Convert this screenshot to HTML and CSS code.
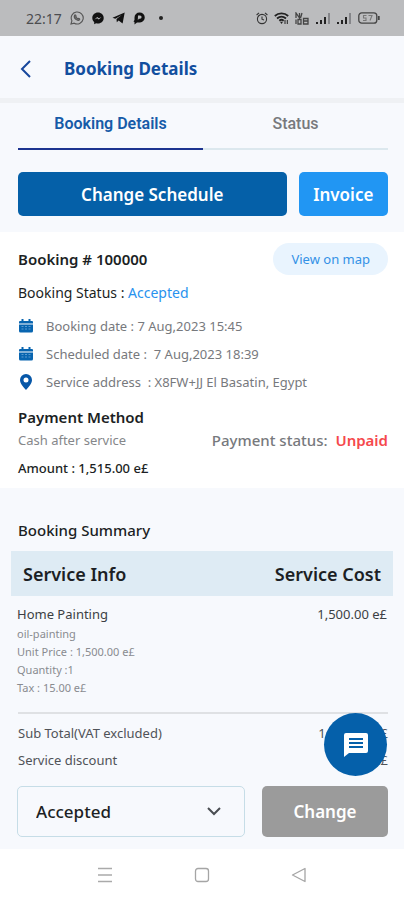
FILE: index.html
```html
<!DOCTYPE html>
<html lang="en">
<head>
<meta charset="utf-8">
<meta name="viewport" content="width=device-width, initial-scale=1">
<title>Booking Details</title>
<link rel="stylesheet" href="styles.css">
</head>
<body>
<div class="screen">
  <div class="statusbar">
    <div class="status-group">
      <span class="clock">22:17</span>
      <svg width="14" height="14" viewBox="0 0 14 14" fill="none" stroke="#555" stroke-width="1.1"><path d="M1 13l.9-3.2A6 6 0 1 1 4.200 12.200z"/><path d="M4.600 4.200c.8-.8 1.300.2 1.500 1.100-.6.900-.2 1.200 1.700 2.500.8-.8 1.600-.3 2 .4-.5 1.700-2.200 1.500-3.900.2C4.400 7.200 3.900 5.600 4.600 4.200z" fill="#777"/></svg>
      <svg width="12" height="13" viewBox="0 0 12 13"><path d="M6 .5C2.700.5.300 2.900.300 6c0 1.700.700 3.100 1.900 4.100v2.100l1.900-1c.6.200 1.200.3 1.900.3 3.300 0 5.700-2.400 5.700-5.500S9.300.5 6 .5z" fill="#111"/><path d="M2.500 7.500L5.200 5l1.700 1.300L9.500 5 6.800 7.600 5.100 6.300z" fill="#bbbcbe"/></svg>
      <svg width="13" height="12" viewBox="0 0 13 12"><path d="M.5 5.800L12.700.600 10.600 11.400 6.600 8.500 4.800 10.200 4.500 7.100 9.700 3 3.300 6.700z" fill="#111"/></svg>
      <svg width="12" height="13" viewBox="0 0 12 13"><path d="M6.500.5A5 5 0 0 1 7 10.500H4L1.500 12.500V10L.5 9.500 1.500 8V5.500A5 5 0 0 1 6.500.5z" fill="#111"/><path d="M5 3.500h2a1.600 1.600 0 0 1 0 3.200H5.800L4.800 8.200z" fill="#bbbcbe"/></svg>
      <i class="dot"></i>
    </div>
    <div class="status-group status-right">
      <svg width="12" height="13" viewBox="0 0 12 13" fill="none" stroke="#333" stroke-width="1.1"><circle cx="6" cy="7" r="4.600"/><path d="M6 4.500V7.200L8 8M.6 3L3 .8M11.400 3L9 .8"/></svg>
      <svg width="15" height="13" viewBox="0 0 15 13" fill="none" stroke="#222" stroke-width="1.800"><path d="M.8 4C4.600.600 10.400.600 14.200 4M3 6.500c2.700-2.300 6.300-2.300 9 0M5.300 8.700c1.400-1.200 3-1.200 4.400 0"/><path d="M6 9.800h3L7.500 12z" fill="#222" stroke="none"/><path d="M11 8v4M13.300 8v4" stroke-width="1"/></svg>
      <svg width="15" height="13" viewBox="0 0 15 13" fill="none" stroke="#444" stroke-width="1.300"><path d="M1 6V1l3.500 5V1M7 1L5.500 6M1 12V7.500M3 7.500V12h3V7.500H3zM8.500 12V6.500H13V12zM8.500 9H13"/></svg>
      <svg width="15" height="12" viewBox="0 0 15 12"><path d="M0 10h2v2H0zM4 8h2v4H4zM8 5h2v7H8z" fill="#222"/><path d="M12 1h2v11h-2z" fill="#85868a"/></svg>
      <svg width="15" height="12" viewBox="0 0 15 12"><path d="M0 10h2v2H0zM4 8h2v4H4zM8 5h2v7H8z" fill="#222"/><path d="M12 1h2v11h-2z" fill="#85868a"/></svg>
      <svg width="22" height="12" viewBox="0 0 22 12" fill="none" stroke="#444" stroke-width="1.300"><rect x=".8" y=".8" width="18" height="10.400" rx="3"/><path d="M20.800 4v4" stroke-width="1.800"/><path d="M8.500 3.500h-3V6h2.500v2.500H5M10.500 3.500H14L12 8.500" stroke="#777" stroke-width="1.100"/></svg>
    </div>
  </div>

  <header class="appbar">
    <button class="back" type="button" aria-label="Back"><svg width="12" height="18" viewBox="0 0 12 18" fill="none" stroke="#17479c" stroke-width="2"><path d="M10 1L2 9l8 8"/></svg></button>
    <h1>Booking Details</h1>
  </header>

  <nav class="tabs">
    <a class="tab active" href="#details">Booking Details</a>
    <a class="tab" href="#status">Status</a>
  </nav>

  <div class="actions">
    <button class="btn primary" type="button">Change Schedule</button>
    <button class="btn accent" type="button">Invoice</button>
  </div>

  <section class="details" id="details">
    <div class="row">
      <h2>Booking # 100000</h2>
      <button class="pill" type="button">View on map</button>
    </div>
    <p class="state">Booking Status : <span>Accepted</span></p>
    <ul class="facts">
      <li><svg width="16" height="16" viewBox="0 0 16 16"><path d="M3.500 1h2v2h5V1h2v2H14a1 1 0 0 1 1 1v1.500H1V4a1 1 0 0 1 1-1h1.500z" fill="#0865b0"/><path d="M1 6.500h14V13a1.500 1.500 0 0 1-1.500 1.500h-11A1.500 1.500 0 0 1 1 13z" fill="#0865b0"/><path d="M3.500 8.500h9M3.500 11h9" stroke="#5b9bd0" stroke-dasharray="2 1.500"/></svg>Booking date : 7 Aug,2023 15:45</li>
      <li><svg width="16" height="16" viewBox="0 0 16 16"><path d="M3.500 1h2v2h5V1h2v2H14a1 1 0 0 1 1 1v1.500H1V4a1 1 0 0 1 1-1h1.500z" fill="#0865b0"/><path d="M1 6.500h14V13a1.500 1.500 0 0 1-1.500 1.500h-11A1.500 1.500 0 0 1 1 13z" fill="#0865b0"/><path d="M3.500 8.500h9M3.500 11h9" stroke="#5b9bd0" stroke-dasharray="2 1.500"/></svg>Scheduled date :&nbsp; 7 Aug,2023 18:39</li>
      <li><svg width="16" height="16" viewBox="0 0 16 16"><path d="M8 0a6 6 0 0 1 6 6c0 3.500-3 6.500-6 10C5 12.500 2 9.500 2 6a6 6 0 0 1 6-6zm0 3.500a2.500 2.500 0 1 0 0 5 2.500 2.500 0 0 0 0-5z" fill="#0757a8"/></svg>Service address &nbsp;: X8FW+JJ El Basatin, Egypt</li>
    </ul>
    <h2>Payment Method</h2>
    <div class="row pay">
      <span class="method">Cash after service</span>
      <span class="paystate">Payment status: <strong>Unpaid</strong></span>
    </div>
    <p class="amount">Amount : 1,515.00 e£</p>
  </section>

  <section class="summary">
    <h2>Booking Summary</h2>
    <table>
      <thead><tr><th>Service Info</th><th>Service Cost</th></tr></thead>
      <tbody><tr>
        <td><div class="item">Home Painting</div><div class="meta">oil-painting</div><div class="meta">Unit Price : 1,500.00 e£</div><div class="meta">Quantity :1</div><div class="meta">Tax : 15.00 e£</div></td>
        <td class="item">1,500.00 e£</td>
      </tr></tbody>
    </table>
    <dl class="totals">
      <div><dt>Sub Total(VAT excluded)</dt><dd>1,500.00 e£</dd></div>
      <div><dt>Service discount</dt><dd>0.00 e£</dd></div>
    </dl>
    <button class="chat" type="button" aria-label="Chat"><svg width="24" height="24" viewBox="0 0 24 24"><path d="M2 0h20a2 2 0 0 1 2 2v16a2 2 0 0 1-2 2H5l-5 4V2a2 2 0 0 1 2-2z" fill="#fff"/><path d="M5 6h14M5 10h14M5 14h14" stroke="#0560aa" stroke-width="2"/></svg></button>
  </section>

  <form class="change">
    <div class="select">
      <select aria-label="Booking status"><option>Accepted</option><option>Completed</option><option>Canceled</option></select>
      <svg width="14" height="9" viewBox="0 0 14 9" fill="none" stroke="#4a4d52" stroke-width="2"><path d="M1 1l6 6 6-6"/></svg>
    </div>
    <button class="btn muted" type="button">Change</button>
  </form>

  <div class="navbar">
    <button type="button" aria-label="Recent apps"><svg width="16" height="16" viewBox="0 0 16 16" stroke="#aaa" stroke-width="1.300"><path d="M1 1.500h14M1 8h14M1 14.500h14"/></svg></button>
    <button type="button" aria-label="Home"><svg width="16" height="16" viewBox="0 0 16 16" fill="none" stroke="#a5a5a5" stroke-width="1.300"><rect x="1.500" y="1.500" width="13" height="13" rx="2.500"/></svg></button>
    <button type="button" aria-label="Go back"><svg width="16" height="16" viewBox="0 0 16 16" fill="none" stroke="#a5a5a5" stroke-width="1.300" stroke-linejoin="round"><path d="M1.500 8L14 1.500v13z"/></svg></button>
  </div>
</div>
</body>
</html>
```
FILE: styles.css
```css
* { box-sizing: border-box; }
body {
  margin: 0;
  background: #f7f9fd;
  color: #1c1f24;
  font-family: "Noto Sans", "Open Sans", sans-serif;
  font-size: 13px;
}
h1, h2, p, ul, dl, dd { margin: 0; padding: 0; }
button, select { font-family: inherit; border: 0; padding: 0; background: none; }
svg { display: block; flex: none; }

.screen { min-height: 100vh; display: flex; flex-direction: column; }

.statusbar {
  height: 36px;
  padding: 0 24px 0 26px;
  background: #bbbcbe;
  display: flex;
  align-items: center;
  justify-content: space-between;
}
.status-group { display: flex; align-items: center; gap: 8px; }
.status-right { gap: 6px; }
.clock { font-size: 14px; color: #4c4d50; }
.dot { width: 4px; height: 4px; margin-left: 6px; border-radius: 50%; background: #222; }

.appbar {
  height: 67px;
  padding: 3px 20px 0;
  border-bottom: 5px solid #eff1f4;
  display: flex;
  align-items: center;
  gap: 32px;
}
.appbar h1 { font-size: 17px; line-height: 24px; font-weight: 700; color: #124f9f; }

.tabs { margin: 0 16px 0 18px; display: flex; }
.tab {
  flex: 1;
  height: 47px;
  border-bottom: 2px solid #dce8ee;
  color: #77797d;
  font: 500 16px/42px Roboto, sans-serif;
  text-align: center;
  text-decoration: none;
}
.tab.active { color: #165ba8; border-color: #1d3490; font-weight: 600; }

.actions { padding: 22px 16px 16px 18px; display: flex; gap: 12px; }
.btn { border-radius: 5px; color: #fff; font-size: 17px; font-weight: 600; }
.actions .btn { height: 44px; }
.primary { flex: 3; background: #0560a8; }
.accent { flex: 1; background: #2196f3; }

.details { padding: 11px 16px 10px 18px; background: #fff; }
.row { display: flex; align-items: center; justify-content: space-between; }
.details h2 { font-size: 15px; line-height: 22px; font-weight: 600; }
.pill {
  height: 32px;
  padding: 0 18px;
  border-radius: 16px;
  background: #e9f4fe;
  color: #3391e6;
  font-size: 13px;
}
.state { padding: 8px 0 9px; font-size: 14px; line-height: 20px; }
.state span { color: #2892ee; }
.facts { list-style: none; padding-bottom: 10px; color: #77797d; }
.facts li { height: 28px; display: flex; align-items: center; gap: 12px; }
.method { color: #85878a; }
.pay { height: 24px; }
.paystate { font-size: 15px; font-weight: 500; color: #77797d; }
.paystate strong { margin-left: 4px; color: #f5484c; font-weight: 600; }
.amount { padding-top: 6px; font-size: 13px; line-height: 20px; font-weight: 500; }

.summary { position: relative; padding-top: 32px; }
.summary h2 { padding: 0 18px 11px; font-size: 15px; line-height: 20px; font-weight: 500; }
table { width: calc(100% - 22px); margin: 0 11px; border-collapse: collapse; }
th { height: 45px; padding: 0 12px; background: #deebf4; font-size: 18px; font-weight: 600; text-align: left; }
th:last-child, td:last-child { text-align: right; }
td { padding: 7px 6px 15px; vertical-align: top; }
.item { font-size: 13px; line-height: 22px; color: #3c3f44; }
.meta { font-size: 11px; line-height: 18px; color: #898b90; }
.totals { margin: 0 16px 0 18px; padding-top: 5px; border-top: 2px solid #dfe1e4; color: #505358; }
.totals div { height: 27px; display: flex; align-items: center; justify-content: space-between; }
.chat {
  position: absolute;
  right: 17px;
  bottom: -3px;
  width: 63px;
  height: 63px;
  border-radius: 50%;
  background: #0560aa;
  display: grid;
  place-items: center;
}

.change { padding: 13px 16px 12px 17px; display: flex; gap: 17px; }
.select { position: relative; flex: 228; }
.select select {
  width: 100%;
  height: 51px;
  padding: 0 18px;
  border: 1px solid #c6dde7;
  border-radius: 5px;
  appearance: none;
  color: #1c1f24;
  font-size: 17px;
  font-weight: 500;
}
.select svg { position: absolute; right: 24px; top: 21px; pointer-events: none; }
.muted { flex: 126; background: #9b9b9b; }

.navbar {
  flex: 1;
  min-height: 51px;
  background: #fff;
  display: flex;
  align-items: center;
  justify-content: center;
  gap: 81px;
}
```
